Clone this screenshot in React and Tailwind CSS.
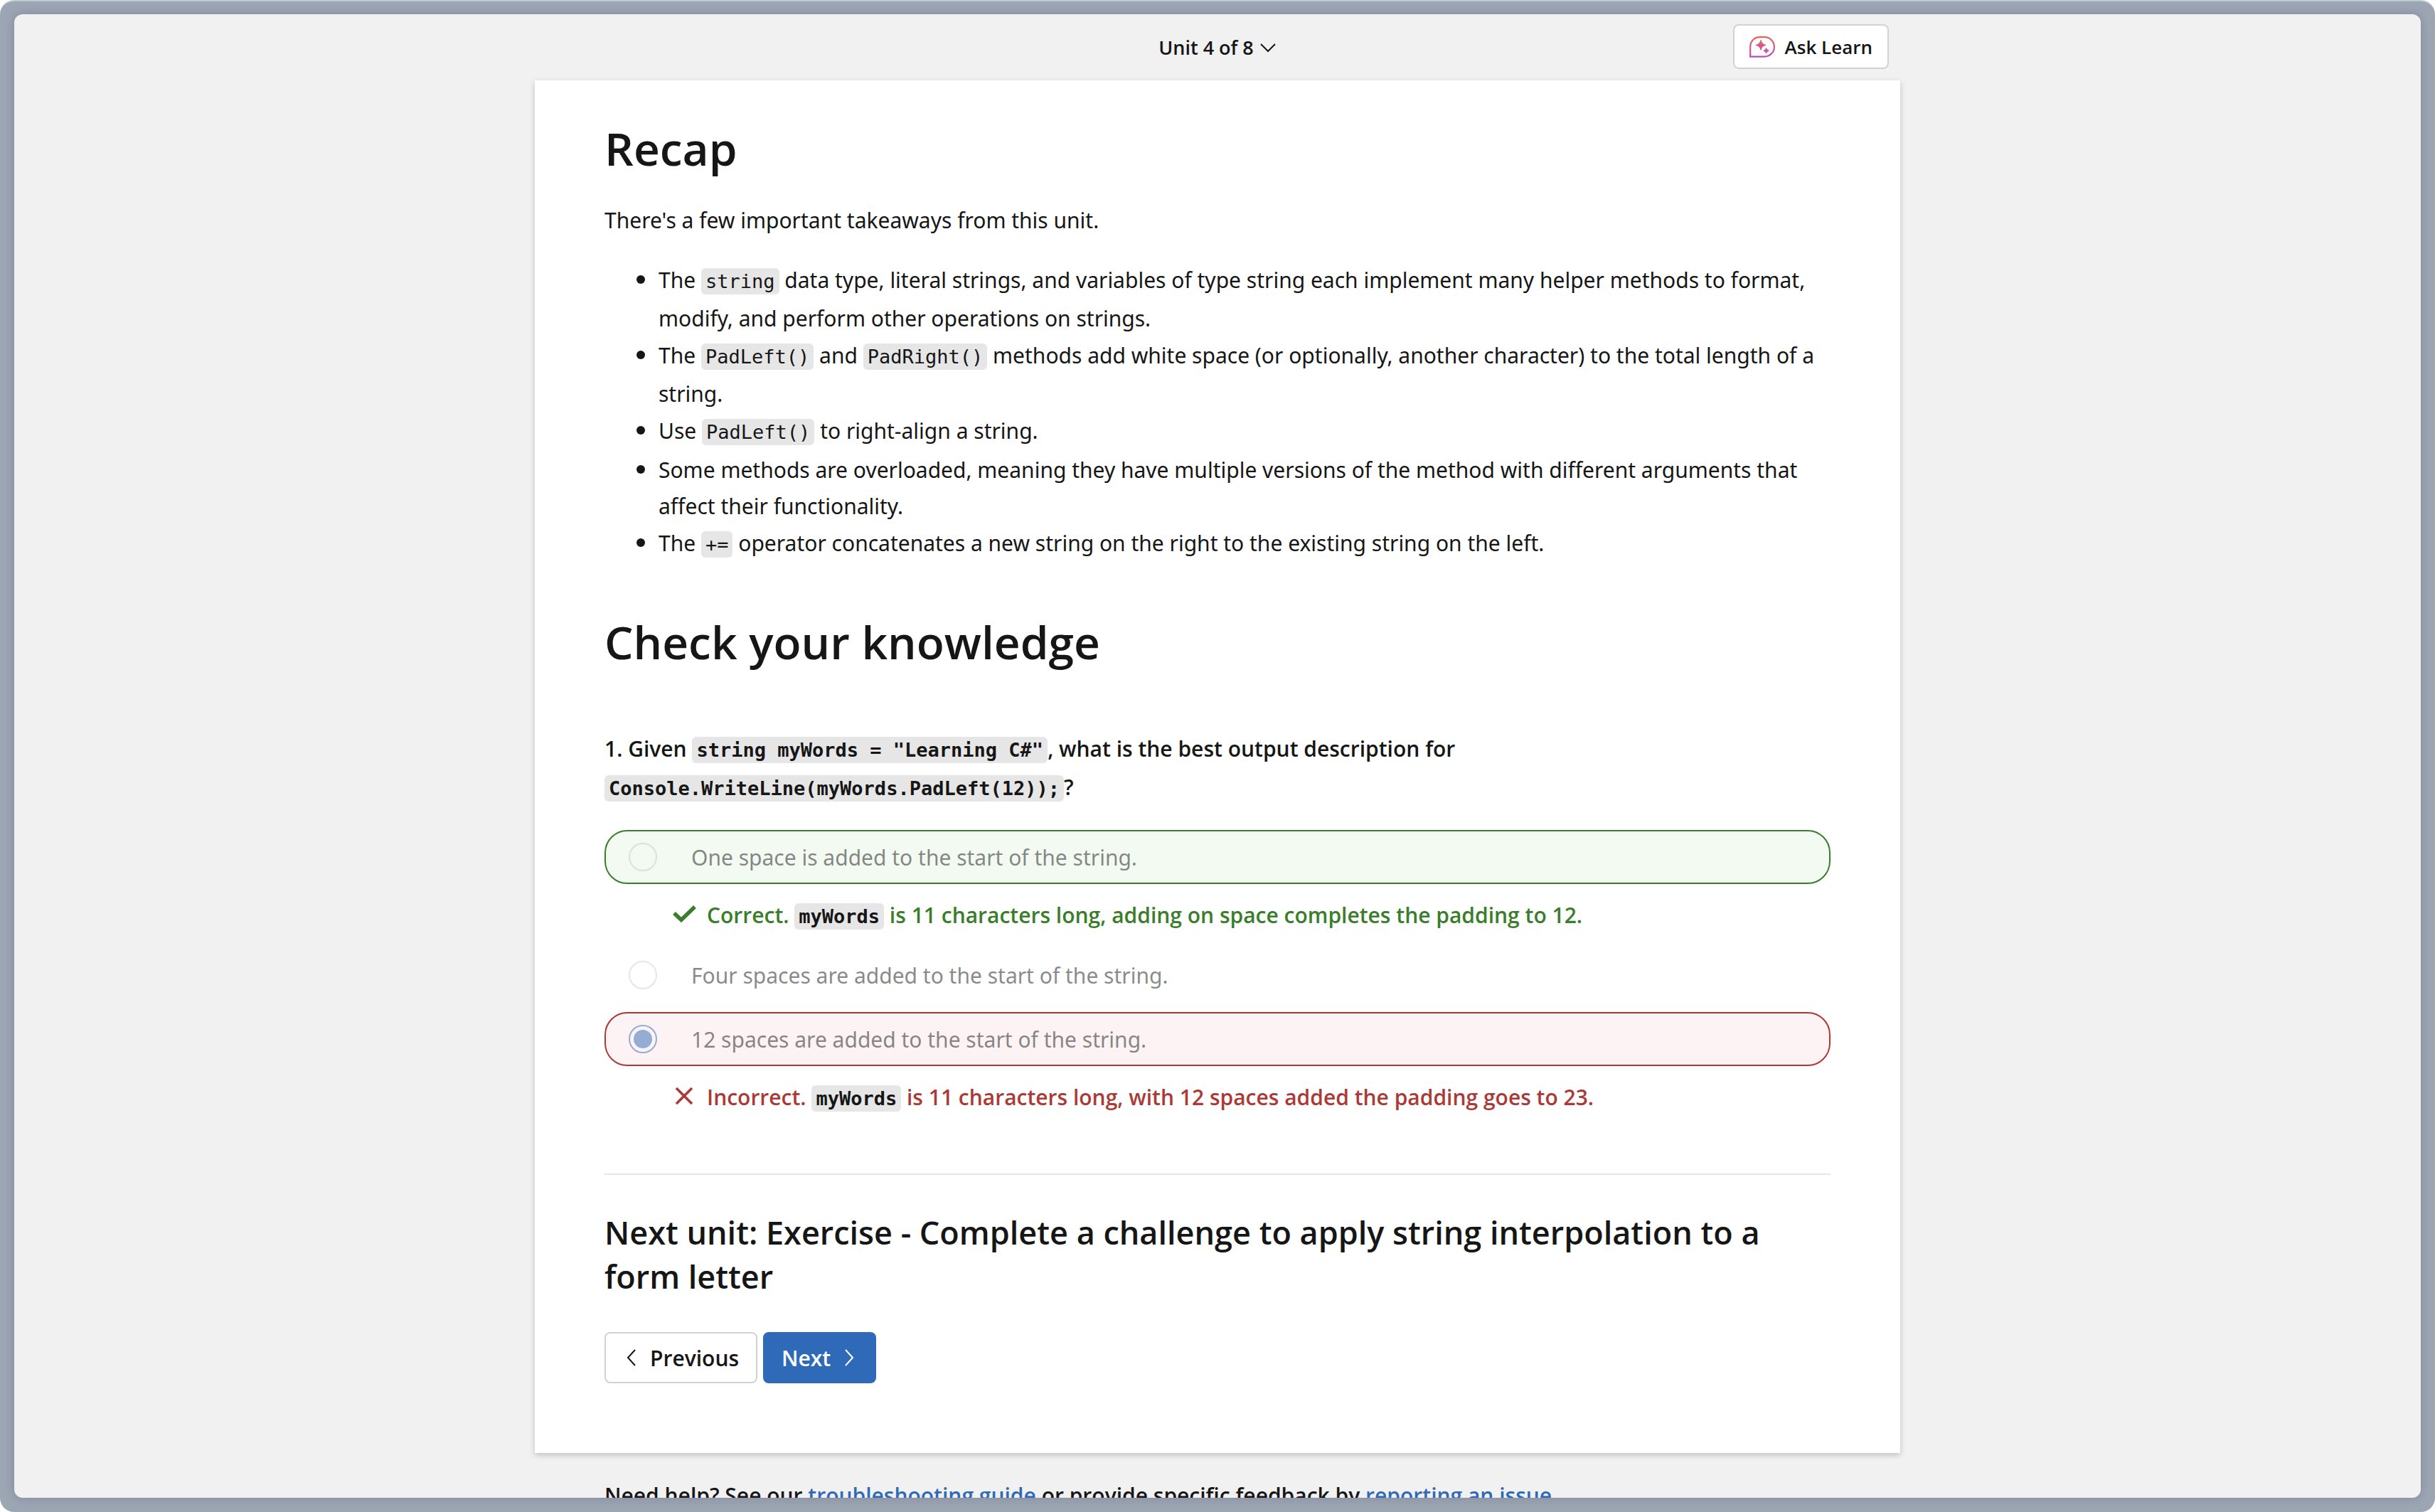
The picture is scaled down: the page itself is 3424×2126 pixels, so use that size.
const Code = ({ children, className = "" }) => (
  <code className={`rounded-md bg-[#e6e6e6] px-[6px] py-[3px] font-['DejaVu_Sans_Mono',monospace] text-[27px] leading-[53px] text-[#161616] ${className}`}>
    {children}
  </code>
);

const Chevron = ({ d, className }) => (
  <svg viewBox="0 0 24 24" className={className} fill="none" stroke="currentColor" strokeWidth="2" aria-hidden="true">
    <path d={d} />
  </svg>
);

const AskLearnIcon = () => (
  <svg viewBox="0 0 36 30" className="h-[30px] w-9" aria-hidden="true">
    <defs>
      <linearGradient id="ask-learn" x1="0" y1="0" x2="0" y2="30" gradientUnits="userSpaceOnUse">
        <stop offset="0" stopColor="#f0634a" />
        <stop offset="0.5" stopColor="#d4588c" />
        <stop offset="1" stopColor="#b94bc4" />
      </linearGradient>
    </defs>
    <path d="M1.2 28.6V14.5A13.3 13.3 0 0 1 14.5 1.2H21.2A13.7 13.7 0 0 1 21.2 28.6Z" fill="none" stroke="url(#ask-learn)" strokeWidth="2.2" />
    <path d="M16 5.4Q17.2 11.2 23 12.4Q17.2 13.6 16 19.4Q14.8 13.6 9 12.4Q14.8 11.2 16 5.4Z" fill="url(#ask-learn)" stroke="url(#ask-learn)" strokeWidth="1" strokeLinejoin="round" />
    <path d="M23.6 16.4Q24.3 19.6 27.4 20.2Q24.3 20.9 23.6 24Q22.9 20.9 19.8 20.2Q22.9 19.6 23.6 16.4Z" fill="url(#ask-learn)" stroke="url(#ask-learn)" strokeWidth="1" strokeLinejoin="round" />
  </svg>
);

const CheckIcon = () => (
  <svg viewBox="0 0 34 26" className="mt-[29px] h-[26px] w-[34px] shrink-0" fill="none" stroke="currentColor" strokeWidth="5.5" aria-hidden="true">
    <path d="M2 12L12 21.5L31 3" />
  </svg>
);

const CrossIcon = () => (
  <svg viewBox="0 0 34 26" className="mt-[29px] h-[26px] w-[34px] shrink-0" fill="none" stroke="currentColor" strokeWidth="3.5" aria-hidden="true">
    <path d="M5 2L27 24M27 2L5 24" />
  </svg>
);

const optionStyles = {
  correct: "border-[#3a7d2a] bg-[#f3faf2]",
  plain: "border-transparent",
  incorrect: "border-[#ab3a37] bg-[#fdf3f4]",
};

function Option({ id, tone, checked, label }) {
  return (
    <div className={`flex h-[76px] items-center rounded-[32px] border-2 pl-8 ${optionStyles[tone]}`}>
      <input
        type="radio"
        name="question-1"
        id={id}
        defaultChecked={checked}
        disabled
        className="size-10 shrink-0 appearance-none rounded-full border-2 border-[#161616] bg-white bg-clip-content p-[5px] opacity-10 checked:border-[#2f6ab8] checked:bg-[#2f6ab8] checked:opacity-50"
      />
      <label htmlFor={id} className="pl-12 text-[#161616] opacity-50">{label}</label>
    </div>
  );
}

export default function App() {
  return (
    <div className="h-screen bg-white font-['Noto_Sans',sans-serif] text-[30px] leading-[51px] text-[#161616]">
      <div className="h-full rounded-[20px] border-t-2 border-[#c3c9d4] bg-[#9da7b4] px-5 pt-[18px] pb-5">
        <div className="h-full overflow-hidden rounded-xl bg-[#f1f1f1] shadow-[0_0_16px_rgba(110,105,140,0.55)]">
          <div className="mx-auto max-w-[1920px]">
            <header className="grid grid-cols-[1fr_auto_1fr] items-center px-4 pt-[14px] pb-4 font-['Open_Sans',sans-serif] text-[27px] leading-9 font-semibold">
              <span />
              <button type="button" className="flex items-center gap-2 pt-0.5">
                Unit 4 of 8
                <Chevron d="M2 7L12 17L22 7" className="size-6" />
              </button>
              <button type="button" className="flex h-[63px] items-center gap-[14px] justify-self-end rounded-lg border-2 border-[#d2d2d2] bg-white px-[21px] pt-px text-[26px]">
                <AskLearnIcon />
                Ask Learn
              </button>
            </header>

            <main className="bg-white px-[98px] pb-[98px] shadow-[0_3px_8px_rgba(0,0,0,0.2)]">
              <h2 className="pt-[54px] font-['Open_Sans',sans-serif] text-[64px] leading-[84px] font-semibold">Recap</h2>
              <p className="mt-[33px]">There's a few important takeaways from this unit.</p>
              <ul className="mt-8 ml-[76px] list-disc marker:text-[34px]">
                <li>The <Code>string</Code> data type, literal strings, and variables of type string each implement many helper methods to format, modify, and perform other operations on strings.</li>
                <li>The <Code>PadLeft()</Code> and <Code>PadRight()</Code> methods add white space (or optionally, another character) to the total length of a string.</li>
                <li>Use <Code>PadLeft()</Code> to right-align a string.</li>
                <li>Some methods are overloaded, meaning they have multiple versions of the method with different arguments that affect their functionality.</li>
                <li>The <Code>+=</Code> operator concatenates a new string on the right to the existing string on the left.</li>
              </ul>

              <h2 className="mt-[69px] font-['Open_Sans',sans-serif] text-[64px] leading-[84px] font-semibold">Check your knowledge</h2>

              <fieldset className="mt-[82px]">
                <legend className="font-['Open_Sans',sans-serif] font-semibold">
                  1. Given <Code className="font-bold">string myWords = "Learning C#"</Code>, what is the best output description for <br />
                  <Code className="font-bold">Console.WriteLine(myWords.PadLeft(12));</Code>?
                </legend>
                <div className="mt-8 flex flex-col gap-[14px]">
                  <div>
                    <Option id="one-space" tone="correct" label="One space is added to the start of the string." />
                    <div className="ml-24 flex h-[76px] gap-[14px] font-['Open_Sans',sans-serif] font-semibold text-[#3a7d2a]">
                      <CheckIcon />
                      <p className="pt-[18px]">Correct. <Code className="font-bold">myWords</Code> is 11 characters long, adding on space completes the padding to 12.</p>
                    </div>
                  </div>
                  <Option id="four-spaces" tone="plain" label="Four spaces are added to the start of the string." />
                  <div>
                    <Option id="twelve-spaces" tone="incorrect" checked label="12 spaces are added to the start of the string." />
                    <div className="ml-24 flex h-[76px] gap-[14px] font-['Open_Sans',sans-serif] font-semibold text-[#ab3a37]">
                      <CrossIcon />
                      <p className="pt-[18px]">Incorrect. <Code className="font-bold">myWords</Code> is 11 characters long, with 12 spaces added the padding goes to 23.</p>
                    </div>
                  </div>
                </div>
              </fieldset>

              <hr className="mt-[75px] border-t-2 border-[#e6e6e6]" />

              <h3 className="mt-[50px] font-['Open_Sans',sans-serif] text-[45px] leading-[62px] font-semibold">
                Next unit: Exercise - Complete a challenge to apply string interpolation to a form letter
              </h3>
              <nav className="mt-[47px] flex gap-2 font-['Open_Sans',sans-serif] font-semibold">
                <button type="button" className="flex h-[72px] items-center gap-[14px] rounded-lg border-2 border-[#d2d2d2] bg-white px-6">
                  <Chevron d="M17 1L7 12L17 23" className="size-6" />
                  Previous
                </button>
                <button type="button" className="flex h-[72px] items-center gap-[14px] rounded-lg bg-[#2f6ab8] px-[26px] text-white">
                  Next
                  <Chevron d="M7 1L17 12L7 23" className="size-6" />
                </button>
              </nav>
            </main>

            <footer className="px-[98px] pt-[34px] font-['Open_Sans',sans-serif] font-semibold">
              Need help? See our <a href="#troubleshooting" className="text-[#2f6ab8]">troubleshooting guide</a> or provide specific feedback by <a href="#report" className="text-[#2f6ab8]">reporting an issue</a>.
            </footer>
          </div>
        </div>
      </div>
    </div>
  );
}
